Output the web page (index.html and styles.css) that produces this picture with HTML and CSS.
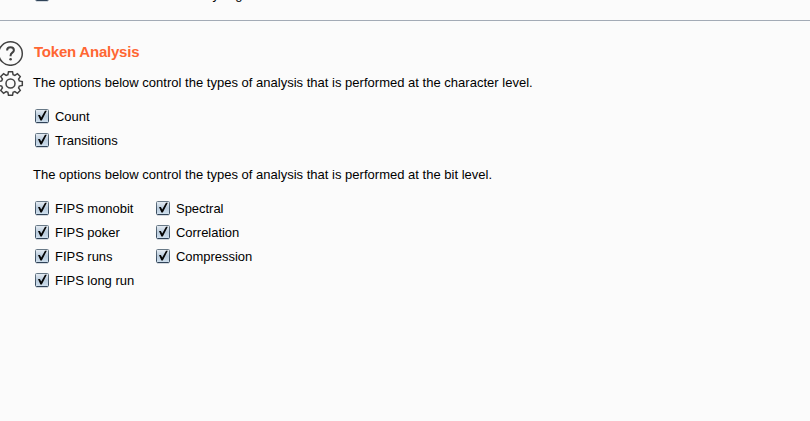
FILE: index.html
```
<!DOCTYPE html>
<html lang="en">
<head>
<meta charset="utf-8">
<title>Token Analysis</title>
<link rel="stylesheet" href="styles.css">
</head>
<body>
<svg class="defs" aria-hidden="true">
  <defs>
    <linearGradient id="face" x1="0" y1="0" x2="0" y2="1">
      <stop offset="0" stop-color="#e8eef4"/>
      <stop offset=".5" stop-color="#b9cbdc"/>
      <stop offset="1" stop-color="#d0e0ee"/>
    </linearGradient>
    <linearGradient id="edge" x1="0" y1="0" x2="0" y2="1">
      <stop offset="0" stop-color="#687987"/>
      <stop offset="1" stop-color="#2f4257"/>
    </linearGradient>
    <symbol id="box" viewBox="0 0 14 15">
      <rect x=".5" y=".5" width="13" height="13" rx="1" fill="url(#face)" stroke="url(#edge)"/>
      <path d="M1 14.5h12" stroke="#d3d8de"/>
      <path d="M3 6H4.9L6.2 8.6 10 1.8H11.8L6.8 11.5H5.4Z" fill="#050505"/>
    </symbol>
  </defs>
</svg>
<section class="previous">
  <label class="option"><svg class="box"><use href="#box"/></svg><span>Base64-decode before analyzing</span></label>
</section>
<section class="panel">
  <div class="tools">
    <svg class="tool" viewBox="0 0 26 26">
      <circle cx="12.5" cy="13.5" r="11.8"/>
      <path class="mark" d="M9.1 10.4C9.1 8.3 10.4 7.3 12.5 7.3S15.9 8.5 15.9 10.2C15.9 12.7 12.6 12.6 12.6 15.4V16.2"/>
      <circle class="dot" cx="12.6" cy="19.2" r="1.3"/>
    </svg>
    <svg class="tool" viewBox="0 0 26 26">
      <g transform="translate(12.5 13.5)">
        <path d="M-2.6-8.8-2-11.8H2L2.6-8.8 4.38-8.06 6.93-9.76 9.76-6.93 8.06-4.38 8.8-2.6 11.8-2V2L8.8 2.6 8.06 4.38 9.76 6.93 6.93 9.76 4.38 8.06 2.6 8.8 2 11.8H-2L-2.6 8.8-4.38 8.06-6.93 9.76-9.76 6.93-8.06 4.38-8.8 2.6-11.8 2V-2L-8.8-2.6-8.06-4.38-9.76-6.93-6.93-9.76-4.38-8.06Z"/>
        <circle r="4.5"/>
      </g>
    </svg>
  </div>
  <div class="content">
    <h2><span>Token Analysis</span></h2>
    <p>The options below control the types of analysis that is performed at the character level.</p>
    <div class="options">
      <label class="option"><svg class="box"><use href="#box"/></svg><span>Count</span></label>
      <label class="option"><svg class="box"><use href="#box"/></svg><span>Transitions</span></label>
    </div>
    <p>The options below control the types of analysis that is performed at the bit level.</p>
    <div class="columns">
      <div class="options">
        <label class="option"><svg class="box"><use href="#box"/></svg><span>FIPS monobit</span></label>
        <label class="option"><svg class="box"><use href="#box"/></svg><span>FIPS poker</span></label>
        <label class="option"><svg class="box"><use href="#box"/></svg><span>FIPS runs</span></label>
        <label class="option"><svg class="box"><use href="#box"/></svg><span>FIPS long run</span></label>
      </div>
      <div class="options">
        <label class="option"><svg class="box"><use href="#box"/></svg><span>Spectral</span></label>
        <label class="option"><svg class="box"><use href="#box"/></svg><span>Correlation</span></label>
        <label class="option"><svg class="box"><use href="#box"/></svg><span>Compression</span></label>
      </div>
    </div>
  </div>
</section>
</body>
</html>
```
FILE: styles.css
```
* { box-sizing: border-box; }
body {
  margin: 0;
  height: 421px;
  overflow: hidden;
  background: #fbfbfb;
  color: #000;
  font: 13px/24px "Liberation Sans", Arial, sans-serif;
}
.defs { display: block; width: 0; height: 0; }
.previous {
  display: flex;
  align-items: flex-end;
  height: 21px;
  padding: 0 0 14px 35px;
  border-bottom: 1px solid #a3abb6;
}
.panel { display: flex; padding-top: 19px; }
.tools {
  display: flex;
  flex-direction: column;
  gap: 4px;
  width: 33px;
  margin-left: -2px;
}
.tool {
  width: 26px;
  height: 26px;
  fill: none;
  stroke: #424242;
  stroke-width: 1.5;
}
.tool .mark { stroke-width: 2; }
.tool .dot { fill: #424242; stroke: none; }
.content { padding-left: 2px; }
h2 {
  margin: 0;
  height: 24px;
  padding-left: 1px;
  color: #ff6633;
  font-size: 15px;
  font-weight: bold;
  line-height: 24px;
  letter-spacing: -0.22px;
}
p { margin: 7px 0 9px; white-space: nowrap; letter-spacing: 0.012px; }
.options { padding-left: 2px; }
.options + p { margin: 11px 0 9px; }
.columns { display: flex; }
.columns .options { width: 121px; }
.option { display: flex; align-items: center; gap: 6px; height: 24px; white-space: nowrap; }
.option span { padding-top: 2px; letter-spacing: -0.03px; }
.previous .option span { letter-spacing: -0.09px; }
.box { flex: none; width: 14px; height: 15px; }
```
